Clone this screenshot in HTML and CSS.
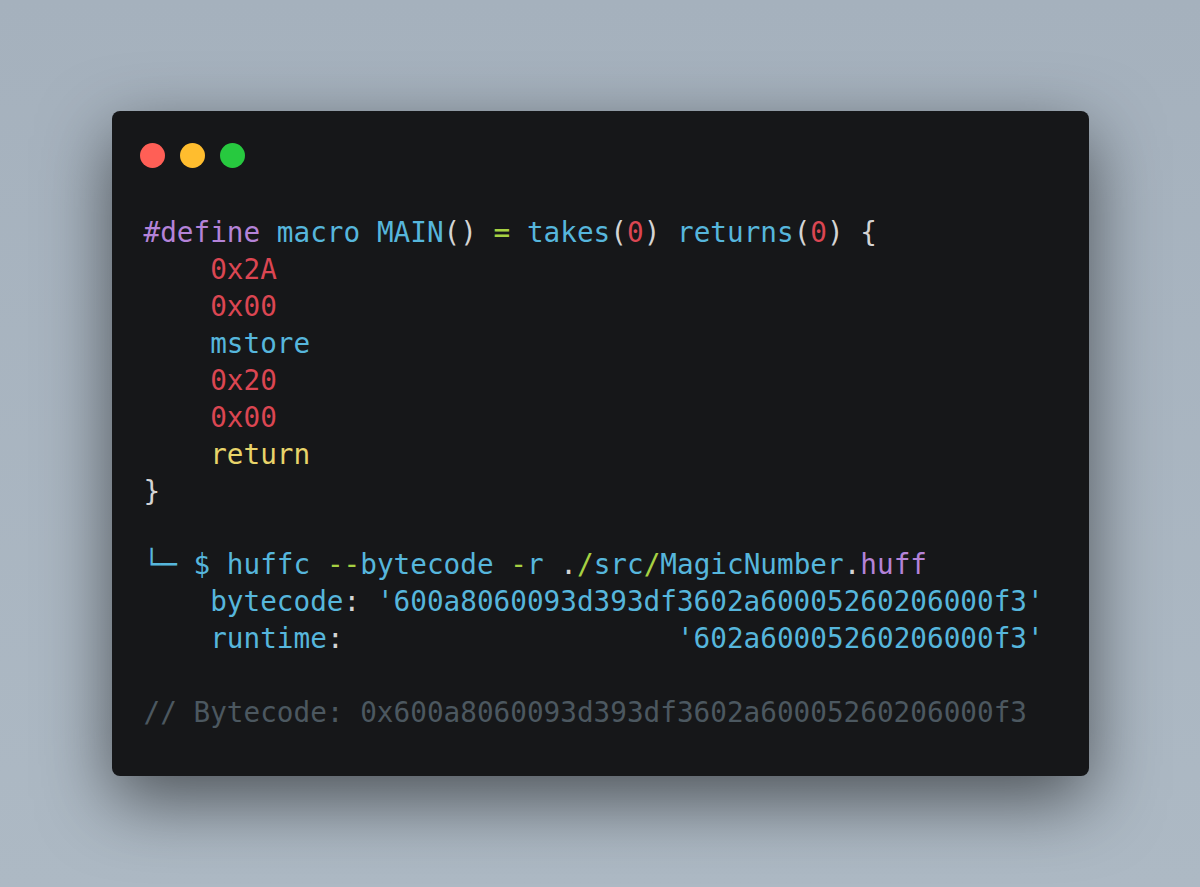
FILE: index.html
```html
<!DOCTYPE html>
<html>
<head>
<meta charset="utf-8">
<link rel="stylesheet" href="styles.css">
</head>
<body>
<div class="stage">
  <div class="window">
    <div class="dots">
      <span class="dot red"></span>
      <span class="dot yellow"></span>
      <span class="dot green"></span>
    </div>
<pre class="code"><span class="p">#define</span> <span class="c">macro</span> <span class="c">MAIN</span><span class="w">()</span> <span class="g">=</span> <span class="c">takes</span><span class="w">(</span><span class="r">0</span><span class="w">)</span> <span class="c">returns</span><span class="w">(</span><span class="r">0</span><span class="w">)</span> <span class="w">{</span>
    <span class="r">0x2A</span>
    <span class="r">0x00</span>
    <span class="c">mstore</span>
    <span class="r">0x20</span>
    <span class="r">0x00</span>
    <span class="y">return</span>
<span class="w">}</span>

<span class="c">└─</span> <span class="c">$</span> <span class="c">huffc</span> <span class="g">--</span><span class="c">bytecode</span> <span class="g">-</span><span class="c">r</span> <span class="w">.</span><span class="g">/</span><span class="c">src</span><span class="g">/</span><span class="c">MagicNumber</span><span class="w">.</span><span class="p">huff</span>
    <span class="c">bytecode</span><span class="w">:</span> <span class="c">'600a8060093d393df3602a60005260206000f3'</span>
    <span class="c">runtime</span><span class="w">:</span>                    <span class="c">'602a60005260206000f3'</span>

<span class="m">// Bytecode: 0x600a8060093d393df3602a60005260206000f3</span></pre>
  </div>
</div>
</body>
</html>
```
FILE: styles.css
```css
html, body {
  margin: 0;
  padding: 0;
}
body {
  background: linear-gradient(180deg, #a5b1bd 0%, #adb9c4 100%);
  font-family: "DejaVu Sans Mono", "Liberation Mono", monospace;
}
.stage {
  height: 887px;
  display: flex;
  align-items: center;
  justify-content: center;
}
.window {
  width: 977px;
  box-sizing: border-box;
  background: #161719;
  border-radius: 8px;
  padding: 32px 0 44px 0;
  box-shadow: 0 24px 70px rgba(0, 0, 0, 0.55);
}
.dots {
  display: flex;
  gap: 15px;
  padding-left: 28px;
  margin-bottom: 47px;
}
.dot {
  width: 25px;
  height: 25px;
  border-radius: 50%;
  display: block;
}
.red { background: #ff5f56; }
.yellow { background: #ffbd2e; }
.green { background: #27c93f; }
.code {
  margin: 0;
  padding-left: 32px;
  font-family: "DejaVu Sans Mono", "Liberation Mono", monospace;
  font-size: 27.7px;
  line-height: 36.9px;
  color: #d4d4d4;
  white-space: pre;
}
.p { color: #b483d8; }
.c { color: #56b6dc; }
.w { color: #d4d4d4; }
.g { color: #a6d142; }
.r { color: #db4652; }
.y { color: #e8d46a; }
.m { color: #4c5860; }
```
